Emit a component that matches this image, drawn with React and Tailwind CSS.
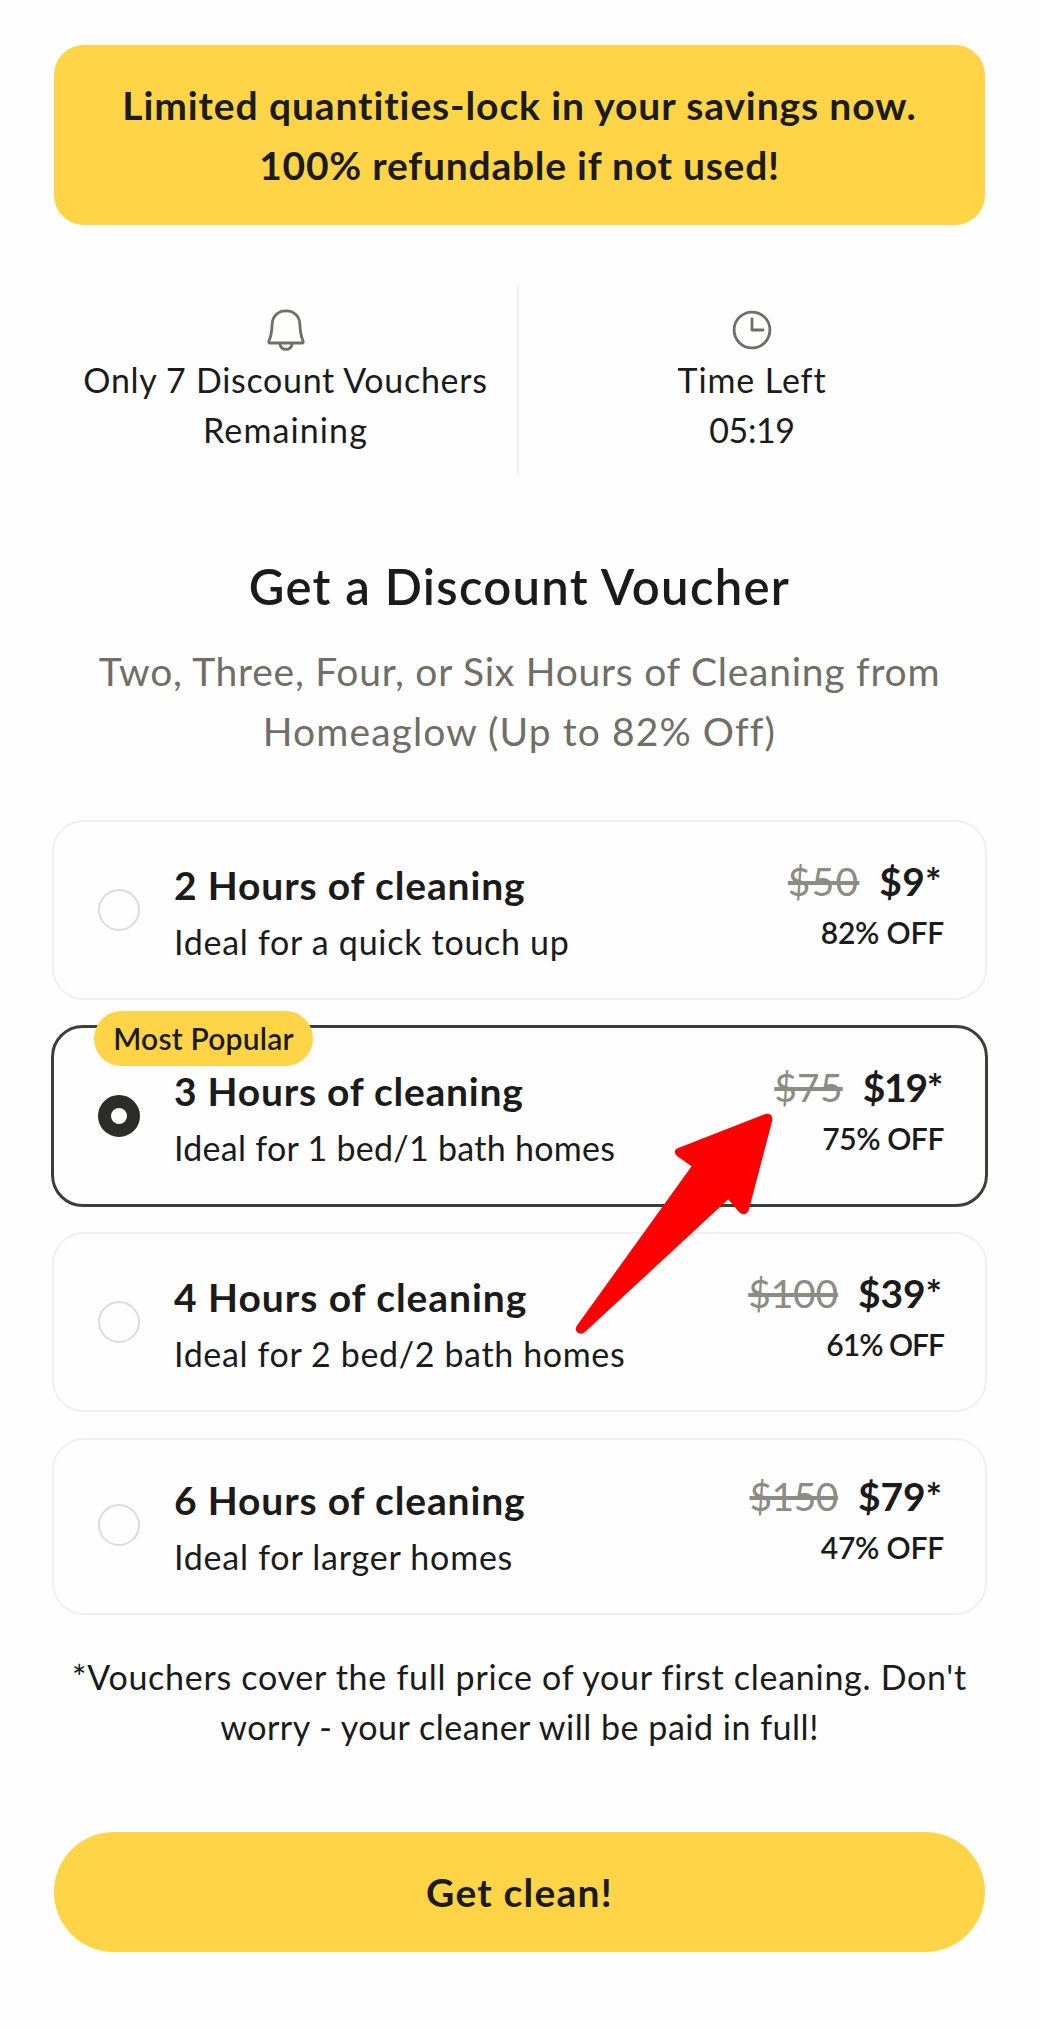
import React from 'react';

const opciones = [
  {
    titulo: '2 Hours of cleaning',
    detalle: 'Ideal for a quick touch up',
    antes: '$50',
    precio: '$9*',
    off: '82% OFF',
    caja: 'h-[180px] border-2 border-[#f0f0f0] px-[44px] pt-[33px]',
    espTitulo: 'tracking-[0.85px]',
    espDetalle: 'tracking-[0.72px]',
    espAntes: 'tracking-[1.2px]',
    espPrecio: 'tracking-[0.3px]',
    espOff: 'tracking-[-0.2px]',
  },
  {
    titulo: '3 Hours of cleaning',
    detalle: 'Ideal for 1 bed/1 bath homes',
    antes: '$75',
    precio: '$19*',
    off: '75% OFF',
    popular: true,
    caja: '-mx-px h-[182px] border-[3px] border-[#3d3d39] px-[44px] pt-[33px]',
    espTitulo: 'tracking-[0.75px]',
    espDetalle: 'tracking-[0.28px]',
    espAntes: 'tracking-[0.2px]',
    espPrecio: 'tracking-[-1.3px]',
    espOff: 'tracking-[-0.4px]',
  },
  {
    titulo: '4 Hours of cleaning',
    detalle: 'Ideal for 2 bed/2 bath homes',
    antes: '$100',
    precio: '$39*',
    off: '61% OFF',
    caja: 'h-[180px] border-2 border-[#f0f0f0] px-[44px] pt-[33px]',
    espTitulo: 'tracking-[0.95px]',
    espDetalle: 'tracking-[0.64px]',
    espAntes: 'tracking-[-0.2px]',
    espPrecio: 'tracking-[-0.1px]',
    espOff: 'tracking-[-1px]',
  },
  {
    titulo: '6 Hours of cleaning',
    detalle: 'Ideal for larger homes',
    antes: '$150',
    precio: '$79*',
    off: '47% OFF',
    caja: 'mt-px h-[177px] border-2 border-[#f0f0f0] px-[44px] pt-[30px]',
    espTitulo: 'tracking-[0.85px]',
    espDetalle: 'tracking-[0.77px]',
    espAntes: 'tracking-[-0.5px]',
    espPrecio: 'tracking-[-0.1px]',
    espOff: 'tracking-[-0.2px]',
  },
];

function Campana() {
  return (
    <svg width="40" height="44" viewBox="0 0 40 44" fill="none" stroke="#706e66" strokeWidth="2.8" strokeLinejoin="round">
      <path d="M20 2.8C11.500 2.800 6.300 8.700 6.100 16.400C5.900 23.600 5.400 27.400 2.900 33.200C2.500 34.300 2.900 35 3.900 35H36.100C37.100 35 37.500 34.300 37.100 33.200C34.600 27.400 34.100 23.600 33.900 16.400C33.700 8.700 28.500 2.800 20 2.800Z" />
      <path d="M13.800 35.500C14.400 39.200 16.800 41.400 20 41.400C23.200 41.400 25.600 39.200 26.200 35.500" />
    </svg>
  );
}

function Reloj() {
  return (
    <svg width="40" height="44" viewBox="0 0 40 44" fill="none" stroke="#706e66" strokeWidth="2.8" strokeLinecap="round" strokeLinejoin="round">
      <circle cx="20" cy="22" r="17.900" />
      <path d="M20 11V22H31" />
    </svg>
  );
}

function Flecha() {
  return (
    <svg className="absolute left-[570px] top-[1105px]" width="210" height="235" viewBox="570 1105 210 235" fill="#ff0000">
      <path d="M677 1148.500L765.500 1114Q772.500 1112.500 772.400 1120L748.700 1210.500Q745 1217 739 1212L728.300 1199.300L585.500 1331.500Q580.500 1336 576.500 1331.500Q574.800 1328.500 577 1325.500L691.600 1166.300L677 1156Q672.500 1151 677 1148.500Z" />
    </svg>
  );
}

function Opcion({ titulo, detalle, antes, precio, off, popular, caja, espTitulo, espDetalle, espAntes, espPrecio, espOff }) {
  return (
    <div className={`relative flex rounded-[32px] ${caja}`}>
      {popular && (
        <span className="absolute left-[40px] top-[-17px] flex h-[55px] w-[219px] items-center justify-center rounded-full bg-[#ffd447] pb-px text-[30px] font-semibold tracking-[0.2px]">
          Most Popular
        </span>
      )}
      <span
        className={`mt-[34px] size-[42px] shrink-0 rounded-full ${popular ? 'border-[13px] border-[#2d2c2a]' : 'border-2 border-[#dcdcdc]'}`}
      />
      <div className="ml-[34px] mt-[4px] flex-1 whitespace-nowrap">
        <div className={`text-[39px] font-bold leading-[52px] ${espTitulo}`}>{titulo}</div>
        <div className={`mt-[9px] text-[34px] leading-[44px] ${espDetalle}`}>{detalle}</div>
      </div>
      <div className="-mr-[3px] whitespace-nowrap text-right">
        <div className="flex justify-end gap-[20px] pr-[2px] text-[39px] leading-[52px]">
          <span className={`text-[#8c8b84] line-through decoration-[4px] ${espAntes}`}>{antes}</span>
          <span className={`font-bold ${espPrecio}`}>{precio}</span>
        </div>
        <div className={`mt-[7px] text-[30px] font-semibold leading-[36px] ${espOff}`}>{off}</div>
      </div>
    </div>
  );
}

export default function App() {
  return (
    <div className="relative h-[2029px] w-[1040px] bg-[#fefefe] pl-[52px] pr-[53px] pt-[45px] font-['Lato',sans-serif] text-[#1b1b1b]">
      <div className="mx-[2px] h-[180px] rounded-[30px] bg-[#ffd447] pt-[30px] text-center text-[39px] font-bold leading-[60px]">
        <div className="tracking-[0.88px]">Limited quantities-lock in your savings now.</div>
        <div className="tracking-[0.75px]">100% refundable if not used!</div>
      </div>

      <div className="mx-[2px] mt-[60px] flex h-[190px] text-center text-[34px] leading-[50px]">
        <div className="flex w-[465px] flex-col items-center border-r-2 border-[#f0f0f0] pt-[23px]">
          <Campana />
          <div className="mt-[3px] tracking-[0.7px]">Only 7 Discount Vouchers</div>
          <div className="tracking-[1.1px]">Remaining</div>
        </div>
        <div className="flex flex-1 flex-col items-center pt-[23px]">
          <Reloj />
          <div className="mt-[3px] tracking-[0.9px]">Time Left</div>
          <div className="tracking-[-0.4px]">05:19</div>
        </div>
      </div>

      <h1 className="mt-[81px] text-center text-[49px] font-semibold leading-[60px] tracking-[1.3px]">Get a Discount Voucher</h1>
      <div className="mt-[25px] text-center text-[39px] leading-[60px] text-[#706e66]">
        <div className="tracking-[0.74px]">Two, Three, Four, or Six Hours of Cleaning from</div>
        <div className="tracking-[1.08px]">Homeaglow (Up to 82% Off)</div>
      </div>

      <div className="mt-[59px] flex flex-col gap-[25px]">
        {opciones.map((o) => (
          <Opcion key={o.titulo} {...o} />
        ))}
      </div>

      <div className="mt-[37px] text-center text-[34px] leading-[50px]">
        <div className="tracking-[0.72px]">*Vouchers cover the full price of your first cleaning. Don't</div>
        <div className="tracking-[0.52px]">worry - your cleaner will be paid in full!</div>
      </div>

      <button className="mx-[2px] mt-[80px] block h-[120px] w-[931px] rounded-full bg-[#ffd447] text-[39px] font-bold tracking-[1.2px]">
        Get clean!
      </button>

      <Flecha />
    </div>
  );
}
